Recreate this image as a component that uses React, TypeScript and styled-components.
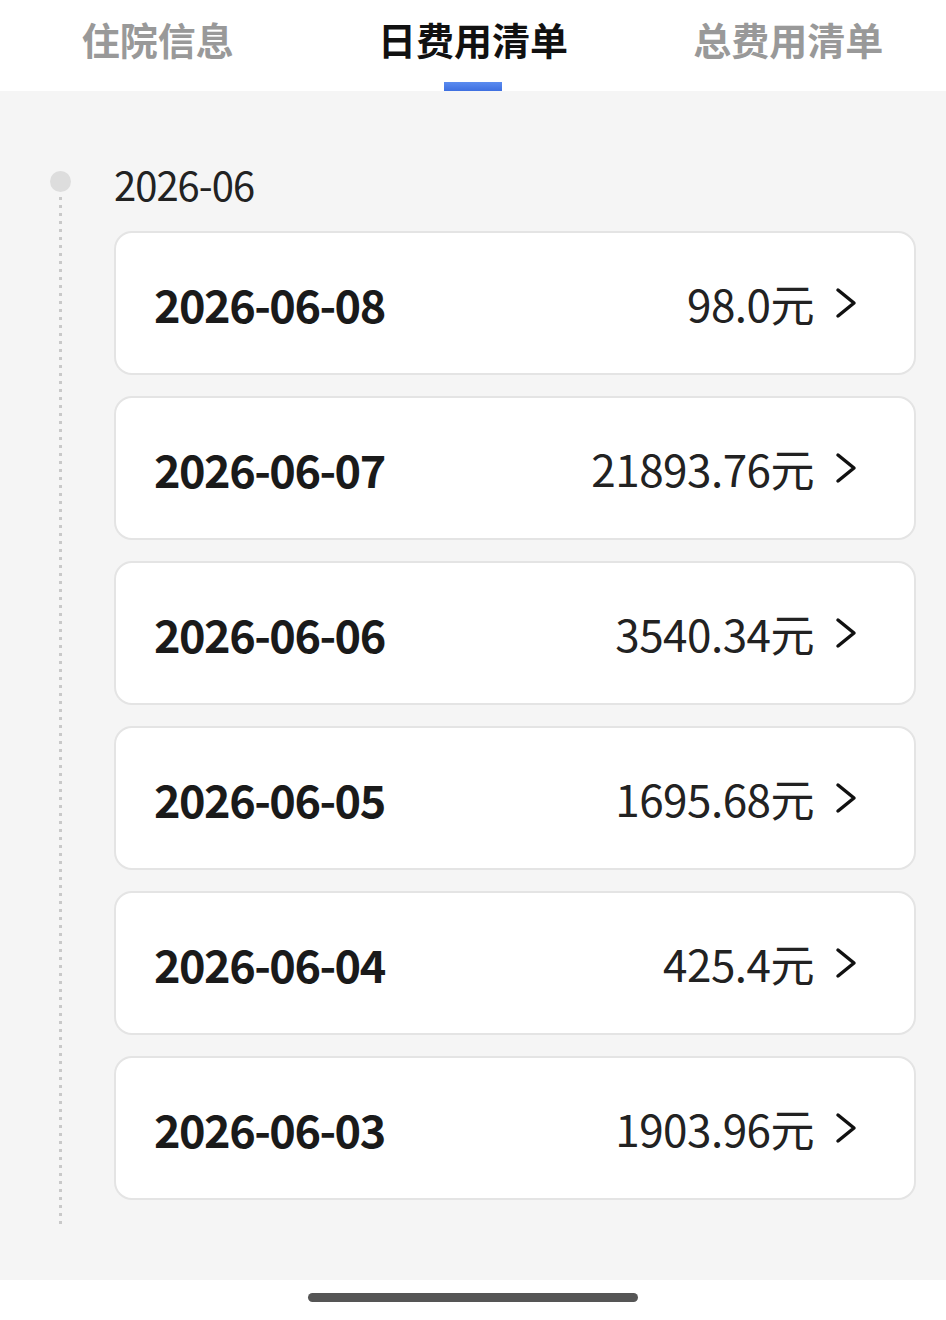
import styled, { createGlobalStyle } from "styled-components";

const GlobalStyle = createGlobalStyle`
  html, body {
    margin: 0;
    padding: 0;
    background: #ffffff;
    font-family: "Noto Sans CJK SC", "Noto Sans", sans-serif;
  }
`;

const Page = styled.div`
  width: 946px;
  height: 1320px;
  display: flex;
  flex-direction: column;
  background: #f5f5f5;
`;

const TabBar = styled.div`
  height: 91px;
  display: flex;
  background: #ffffff;
`;

const Tab = styled.div<{ $active?: boolean }>`
  flex: 1;
  display: flex;
  flex-direction: column;
  align-items: center;
  font-size: 38px;
  font-weight: 700;
  color: ${(p) => (p.$active ? "#111111" : "#999999")};
  padding-top: 12px;
  line-height: 54px;
`;

const Indicator = styled.div<{ $active?: boolean }>`
  margin-top: 16px;
  width: 58px;
  height: 9px;
  background: ${(p) =>
    p.$active ? "linear-gradient(#5b8cf0, #3e6fe0)" : "transparent"};
`;

const Content = styled.div`
  flex: 1;
  display: flex;
  padding: 0 30px 55px 0;
`;

const Rail = styled.div`
  width: 114px;
  display: flex;
  flex-direction: column;
  align-items: center;
  padding: 80px 39px 0 45px;
  box-sizing: border-box;
`;

const Dot = styled.div`
  width: 21px;
  height: 21px;
  border-radius: 50%;
  background: #dddddd;
  flex-shrink: 0;
`;

const DottedLine = styled.div`
  flex: 1;
  width: 3px;
  margin-top: 5px;
  background: repeating-linear-gradient(#c9c9c9 0 3px, transparent 3px 8px);
`;

const List = styled.div`
  flex: 1;
  display: flex;
  flex-direction: column;
  gap: 21px;
  padding: 67px 0 25px;
`;

const Month = styled.div`
  height: 52px;
  line-height: 52px;
  font-size: 40px;
  letter-spacing: -1px;
  color: #222222;
`;

const Card = styled.div`
  height: 144px;
  box-sizing: border-box;
  display: flex;
  align-items: center;
  padding: 0 56px 0 38px;
  background: #ffffff;
  border: 2px solid #e4e4e4;
  border-radius: 18px;
`;

const DateText = styled.div`
  flex: 1;
  font-size: 45px;
  letter-spacing: -1.5px;
  font-weight: 700;
  color: #1a1a1a;
`;

const Amount = styled.div`
  font-size: 44px;
  letter-spacing: -0.5px;
  color: #222222;
  margin-right: 20px;
`;

const Chevron = () => (
  <svg width="24" height="32" viewBox="0 0 24 32">
    <polyline
      points="4,3 20,16 4,29"
      fill="none"
      stroke="#111111"
      strokeWidth="3.5"
      strokeLinecap="round"
      strokeLinejoin="round"
    />
  </svg>
);

const Footer = styled.div`
  height: 40px;
  background: #ffffff;
  display: flex;
  justify-content: flex-start;
  padding: 13px 0 0 308px;
  box-sizing: border-box;
`;

const HomeBar = styled.div`
  width: 330px;
  height: 9px;
  border-radius: 5px;
  background: #555555;
`;

const tabs = ["住院信息", "日费用清单", "总费用清单"];

const rows = [
  { date: "2026-06-08", amount: "98.0元" },
  { date: "2026-06-07", amount: "21893.76元" },
  { date: "2026-06-06", amount: "3540.34元" },
  { date: "2026-06-05", amount: "1695.68元" },
  { date: "2026-06-04", amount: "425.4元" },
  { date: "2026-06-03", amount: "1903.96元" },
];

export default function App() {
  return (
    <Page>
      <GlobalStyle />
      <TabBar>
        {tabs.map((t, i) => (
          <Tab key={t} $active={i === 1}>
            {t}
            <Indicator $active={i === 1} />
          </Tab>
        ))}
      </TabBar>
      <Content>
        <Rail>
          <Dot />
          <DottedLine />
        </Rail>
        <List>
          <Month>2026-06</Month>
          {rows.map((r) => (
            <Card key={r.date}>
              <DateText>{r.date}</DateText>
              <Amount>{r.amount}</Amount>
              <Chevron />
            </Card>
          ))}
        </List>
      </Content>
      <Footer>
        <HomeBar />
      </Footer>
    </Page>
  );
}
